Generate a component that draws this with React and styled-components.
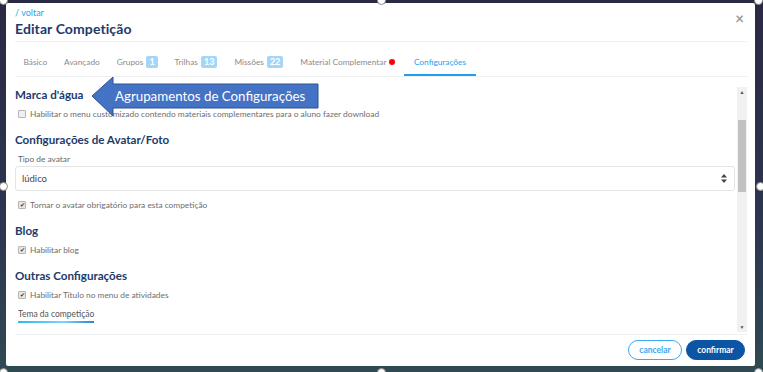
import React from 'react';
import styled, { createGlobalStyle } from 'styled-components';

const GlobalStyle = createGlobalStyle`
  html, body {
    margin: 0;
    padding: 0;
    width: 763px;
    height: 372px;
    overflow: hidden;
    background: linear-gradient(180deg, #2a2944 0%, #2d3550 60%, #2f4a52 100%);
    font-family: Lato, "Open Sans", sans-serif;
  }
`;

const tabs = [
  { label: 'Básico' },
  { label: 'Avançado' },
  { label: 'Grupos', badge: '1' },
  { label: 'Trilhas', badge: '13' },
  { label: 'Missões', badge: '22' },
  { label: 'Material Complementar', dot: true },
  { label: 'Configurações', active: true },
];

const handles = [
  { left: -1, top: -4 },
  { left: 377, top: -4 },
  { left: 754, top: -4 },
  { left: -1, top: 182 },
  { left: 756, top: 182 },
  { left: -1, top: 368 },
  { left: 377, top: 368 },
  { left: 754, top: 368 },
];

const App = () => {
  return (
    <Page>
      <GlobalStyle />
      <Modal>
        <Header>
          <Back>/ voltar</Back>
          <Title>Editar Competição</Title>
          <Close>×</Close>
        </Header>

        <TabBar>
          {tabs.map((t) => (
            <Tab key={t.label} $active={t.active}>
              {t.label}
              {t.badge && <Badge>{t.badge}</Badge>}
              {t.dot && <Dot />}
            </Tab>
          ))}
        </TabBar>

        <Body>
          <Content>
            <Section>
              <Heading>Marca d'água</Heading>
              <CheckRow>
                <Box />
                Habilitar o menu customizado contendo materiais complementares para o aluno fazer download
              </CheckRow>
            </Section>

            <Section>
              <Heading>Configurações de Avatar/Foto</Heading>
              <Label>Tipo de avatar</Label>
              <Select>
                lúdico
                <SelectArrows>
                  <svg width="6" height="9" viewBox="0 0 6 9">
                    <path d="M3 0 L6 3.5 H0 Z M3 9 L6 5.5 H0 Z" fill="#444" />
                  </svg>
                </SelectArrows>
              </Select>
              <CheckRow $top={8}>
                <Box $checked>✔</Box>
                Tornar o avatar obrigatório para esta competição
              </CheckRow>
            </Section>

            <Section>
              <Heading>Blog</Heading>
              <CheckRow>
                <Box $checked>✔</Box>
                Habilitar blog
              </CheckRow>
            </Section>

            <Section>
              <Heading>Outras Configurações</Heading>
              <CheckRow>
                <Box $checked>✔</Box>
                Habilitar Título no menu de atividades
              </CheckRow>
              <ThemeLabel>Tema da competição</ThemeLabel>
            </Section>
          </Content>

          <Scrollbar>
            <ScrollArrow>▲</ScrollArrow>
            <ScrollTrack>
              <Thumb />
            </ScrollTrack>
            <ScrollArrow>▼</ScrollArrow>
          </Scrollbar>
        </Body>

        <Footer>
          <CancelButton>cancelar</CancelButton>
          <ConfirmButton>confirmar</ConfirmButton>
        </Footer>

        <Callout>
          <svg width="236" height="46" viewBox="0 0 236 46">
            <polygon
              points="6,20 27,1 27,8 232,8 232,32 27,32 27,40"
              fill="#4472c4"
              stroke="#2f528f"
              strokeWidth="1"
            />
          </svg>
          <CalloutText>Agrupamentos de Configurações</CalloutText>
        </Callout>
      </Modal>

      {handles.map((h, i) => (
        <Handle key={i} style={{ left: h.left, top: h.top }} />
      ))}
    </Page>
  );
};

export default App;

const Page = styled.div`
  position: relative;
  width: 763px;
  height: 372px;
  padding: 3px 8px 6px 6px;
  box-sizing: border-box;
`;

const Modal = styled.div`
  position: relative;
  height: 363px;
  background: #fff;
  border-radius: 2px;
  padding: 0 8px 0 9px;
  box-sizing: border-box;
  display: flex;
  flex-direction: column;
`;

const Header = styled.div`
  position: relative;
  padding-top: 4px;
  height: 35px;
  border-bottom: 1px solid #eef0f2;
`;

const Back = styled.div`
  font-size: 9px;
  line-height: 12px;
  color: #2ea3ee;
`;

const Title = styled.div`
  font-size: 14px;
  line-height: 19px;
  color: #1d3a6a;
  font-weight: 700;
  letter-spacing: 0.1px;
`;

const Close = styled.div`
  position: absolute;
  right: 3px;
  top: 6px;
  font-size: 15px;
  font-weight: 700;
  color: #9a9a9a;
`;

const TabBar = styled.div`
  display: flex;
  align-items: flex-end;
  border-bottom: 1px solid #eef0f2;
`;

const Tab = styled.div`
  display: flex;
  align-items: center;
  padding: 14px 0 5px;
  margin: 0 ${(p) => (p.$active ? 0 : 8.5)}px;
  line-height: 13px;
  font-size: 8.3px;
  color: ${(p) => (p.$active ? '#1e9ff0' : '#8c8c8c')};
  border-bottom: 2px solid ${(p) => (p.$active ? '#1e9ff0' : 'transparent')};
  padding-left: ${(p) => (p.$active ? 10 : 0)}px;
  padding-right: ${(p) => (p.$active ? 10 : 0)}px;
`;

const Badge = styled.span`
  margin-left: 3px;
  background: #a3d6f8;
  color: #fff;
  font-weight: 700;
  font-size: 9px;
  line-height: 12px;
  padding: 0 3px;
  border-radius: 2px;
  min-width: 4px;
  text-align: center;
`;

const Dot = styled.span`
  width: 6px;
  height: 6px;
  margin-left: 3px;
  border-radius: 50%;
  background: #f00;
`;

const Body = styled.div`
  display: flex;
  height: 257px;
  border-bottom: 1px solid #eef0f2;
`;

const Content = styled.div`
  flex: 1;
  padding-top: 10px;
  padding-right: 1px;
`;

const Section = styled.div`
  display: flex;
  flex-direction: column;
  margin-bottom: 12px;
`;

const Heading = styled.div`
  font-size: 11.6px;
  line-height: 16px;
  font-weight: 700;
  color: #1d3a6a;
  margin-bottom: 5px;
`;

const CheckRow = styled.div`
  display: flex;
  align-items: center;
  margin-top: ${(p) => p.$top || 0}px;
  padding-left: 3px;
  font-size: 8.35px;
  line-height: 12px;
  color: #6e6e6e;
`;

const Box = styled.span`
  width: 6px;
  height: 6px;
  margin-right: 4px;
  border: 1px solid #b5b5b5;
  border-radius: 1px;
  background: ${(p) => (p.$checked ? '#e6e6e6' : '#efefef')};
  color: #333;
  font-size: 6px;
  line-height: 6px;
  text-align: center;
`;

const Label = styled.div`
  padding-left: 3px;
  font-size: 8.3px;
  line-height: 12px;
  color: #666;
  margin-bottom: 1px;
`;

const Select = styled.div`
  display: flex;
  align-items: center;
  justify-content: space-between;
  height: 25px;
  box-sizing: border-box;
  padding: 0 7px 0 6px;
  border: 1px solid #e3e3e3;
  border-radius: 3px;
  font-size: 9.5px;
  color: #444;
`;

const SelectArrows = styled.span`
  display: flex;
`;

const ThemeLabel = styled.div`
  align-self: flex-start;
  margin-top: 7px;
  margin-left: 3px;
  padding-bottom: 1px;
  font-size: 8.5px;
  line-height: 12px;
  color: #555;
  border-bottom: 2px solid transparent;
  border-image: linear-gradient(90deg, #2fb5f0, #7fd4fb 60%, #2a7fd0) 1;
`;

const Scrollbar = styled.div`
  width: 10px;
  margin: 10px 0 2px 1px;
  display: flex;
  flex-direction: column;
  background: #f1f1f1;
`;

const ScrollArrow = styled.div`
  height: 10px;
  font-size: 5px;
  line-height: 10px;
  text-align: center;
  color: #505050;
`;

const ScrollTrack = styled.div`
  flex: 1;
  padding-top: 23px;
`;

const Thumb = styled.div`
  height: 72px;
  margin: 0 1px;
  background: #c1c1c1;
`;

const Footer = styled.div`
  display: flex;
  justify-content: flex-end;
  align-items: center;
  gap: 4px;
  height: 32px;
  padding-right: 2px;
`;

const PillButton = styled.div`
  height: 20px;
  box-sizing: border-box;
  border-radius: 10px;
  font-size: 8.5px;
  font-weight: 700;
  line-height: 18px;
  text-align: center;
`;

const CancelButton = styled(PillButton)`
  width: 54px;
  border: 1px solid #3aa9f2;
  color: #3aa9f2;
  background: #fff;
`;

const ConfirmButton = styled(PillButton)`
  width: 59px;
  border: 1px solid #0c55a5;
  color: #fff;
  background: #0c55a5;
`;

const Callout = styled.div`
  position: absolute;
  left: 80px;
  top: 73px;
  width: 236px;
  height: 46px;
`;

const CalloutText = styled.div`
  position: absolute;
  left: 29px;
  top: 9px;
  width: 200px;
  line-height: 22px;
  font-family: Lato, "Open Sans", sans-serif;
  font-size: 13.3px;
  color: #fff;
  white-space: nowrap;
`;

const Handle = styled.div`
  position: absolute;
  width: 7px;
  height: 7px;
  border-radius: 50%;
  background: #fff;
  border: 1px solid #8a8a8a;
`;
